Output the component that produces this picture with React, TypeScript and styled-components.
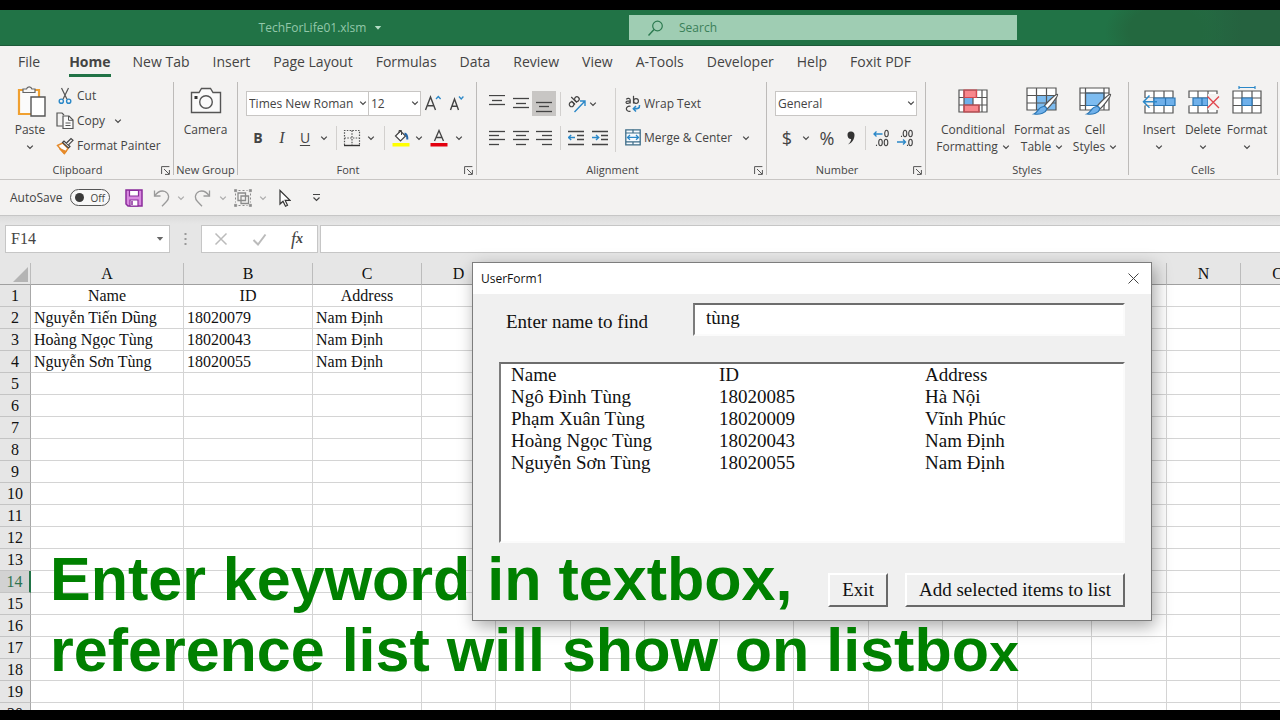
import React from "react";
import styled, { createGlobalStyle, css } from "styled-components";

const UI = `"Open Sans", "Noto Sans", sans-serif`;
const SERIF = `"Liberation Serif", "Times New Roman", serif`;
const INK = "#444444";
const BLUE = "#2b88c8";

const GlobalStyle = createGlobalStyle`
  *, *::before, *::after { box-sizing: border-box; }
  body { margin: 0; background: #000; }
  button, input, select { font: inherit; color: inherit; }
  svg { flex: none; }
`;

const Screen = styled.div`
  position: relative;
  display: flex;
  flex-direction: column;
  height: 100vh;
  padding: 10px 0;
  overflow: hidden;
  background: #000;
  color: ${INK};
  font: 12px/16px ${UI};
`;

/* ---------- Title bar ---------- */

const TitleBar = styled.header`
  flex: none;
  display: grid;
  grid-template-columns: 629fr 388fr 263fr;
  align-items: center;
  height: 36px;
  border-bottom: 1px solid #1d5a3a;
  background:
    radial-gradient(ellipse 60px 40px at 91% 60%, #23683f 60%, transparent 100%),
    linear-gradient(90deg, #217346 90%, #25623f 97%);
`;

const FileName = styled.button`
  display: flex;
  align-items: center;
  justify-content: center;
  gap: 8px;
  padding: 0 0 0 12px;
  border: 0;
  background: none;
  color: #92c8aa;
`;

const SearchBox = styled.label`
  display: flex;
  align-items: center;
  gap: 14px;
  height: 25px;
  padding: 0 18px;
  background: #9fcdb3;
  color: #2f7d52;
`;

const SearchInput = styled.input`
  flex: 1;
  min-width: 0;
  padding: 0;
  border: 0;
  outline: 0;
  background: none;
  &::placeholder { color: #3b8059; opacity: 1; }
`;

/* ---------- Ribbon ---------- */

const TabBar = styled.nav`
  flex: none;
  display: flex;
  gap: 23px;
  height: 34px;
  padding: 4px 18px 0;
  background: #f3f2f1;
  font-size: 14px;
  white-space: nowrap;
`;

const Tab = styled.a<{ $active?: boolean }>`
  height: 27px;
  padding-top: 3px;
  color: ${INK};
  line-height: 18px;
  text-decoration: none;
  ${(p) =>
    p.$active &&
    css`
      margin-left: 6px;
      margin-right: -1px;
      border-bottom: 3px solid #217346;
      font-weight: 700;
    `}
`;

const Ribbon = styled.section`
  flex: none;
  display: flex;
  height: 100px;
  padding-top: 2px;
  overflow: hidden;
  border-bottom: 1px solid #c8c6c4;
  background: #f3f2f1;
`;

const GroupBox = styled.div<{ $width: number }>`
  position: relative;
  flex: none;
  display: flex;
  flex-direction: column;
  width: ${(p) => p.$width}px;
  height: 93px;
  border-right: 1px solid #bdbbb9;
`;

const GroupBody = styled.div<{ $left?: number }>`
  flex: 1;
  display: flex;
  padding-left: ${(p) => p.$left ?? 8}px;
`;

const GroupLabel = styled.div<{ $launcher?: boolean }>`
  height: 13px;
  padding-right: ${(p) => (p.$launcher ? 18 : 0)}px;
  font-size: 11px;
  line-height: 16px;
  text-align: center;
  white-space: nowrap;
`;

const Launcher = styled.button`
  position: absolute;
  right: 3px;
  bottom: 0;
  display: flex;
  padding: 0;
  border: 0;
  background: none;
`;

const Stack = styled.div`
  display: flex;
  flex-direction: column;
  padding: 1px 0 0 4px;
`;

const ToolRows = styled.div`
  display: flex;
  flex-direction: column;
  gap: 9px;
  padding-top: 9px;
`;

const ToolRow = styled.div`
  display: flex;
  align-items: center;
  height: 25px;
`;

const Tool = styled.button<{ $w: number; $on?: boolean }>`
  flex: none;
  display: flex;
  align-items: center;
  justify-content: center;
  width: ${(p) => p.$w}px;
  height: 25px;
  padding: 0;
  border: 0;
  background: ${(p) => (p.$on ? "#c8c6c4" : "none")};
`;

const TextTool = styled.button`
  display: flex;
  align-items: center;
  gap: 3px;
  height: 25px;
  padding: 0;
  border: 0;
  background: none;
  white-space: nowrap;
`;

const BigTool = styled.button<{ $w: number }>`
  flex: none;
  display: flex;
  flex-direction: column;
  align-items: center;
  width: ${(p) => p.$w}px;
  padding: 0;
  border: 0;
  background: none;
  line-height: 17px;
  white-space: nowrap;
`;

const BigIcon = styled.span`
  display: flex;
  align-items: center;
  justify-content: center;
  height: 39px;
  padding-bottom: 2px;
`;

const LabelLine = styled.span`
  display: flex;
  align-items: center;
  justify-content: center;
  gap: 4px;
  height: 17px;
`;

const Divider = styled.span`
  flex: none;
  width: 1px;
  height: 24px;
  background: #d2d0ce;
`;

const TallDivider = styled.span`
  flex: none;
  width: 1px;
  height: 64px;
  margin: 6px 9px 0 2px;
  background: #d2d0ce;
`;

const SelectWrap = styled.span<{ $w: number }>`
  position: relative;
  flex: none;
  display: block;
  width: ${(p) => p.$w}px;
  height: 25px;
  & + & { margin-left: -1px; }
  svg { position: absolute; right: 2px; top: 8px; pointer-events: none; }
`;

const SelectField = styled.select`
  appearance: none;
  width: 100%;
  height: 100%;
  padding: 0 10px 0 2px;
  border: 1px solid #c8c6c4;
  border-radius: 0;
  background: #fff;
`;

const Glyph = styled.span<{ $size?: number; $bold?: boolean; $italic?: boolean; $under?: boolean }>`
  font-size: ${(p) => p.$size ?? 14}px;
  line-height: 18px;
  font-weight: ${(p) => (p.$bold ? 700 : 400)};
  font-style: ${(p) => (p.$italic ? "italic" : "normal")};
  font-family: ${(p) => (p.$italic ? SERIF : "inherit")};
  text-decoration: ${(p) => (p.$under ? "underline" : "none")};
  text-underline-offset: 2px;
`;

/* ---------- Quick access bar ---------- */

const QuickBar = styled.section`
  flex: none;
  display: flex;
  align-items: center;
  height: 36px;
  padding-left: 10px;
  border-bottom: 1px solid #c6c6c6;
  background: #f3f2f1;
`;

const AutoSave = styled.span`
  display: flex;
  align-items: center;
  width: 111px;
  gap: 8px;
`;

const Switch = styled.button`
  display: flex;
  align-items: center;
  gap: 6px;
  width: 40px;
  height: 17px;
  padding: 0 4px;
  border: 1px solid #555;
  border-radius: 9px;
  background: #f8f8f8;
  font-size: 10px;
  line-height: 14px;
  &::before {
    content: "";
    flex: none;
    width: 9px;
    height: 9px;
    border-radius: 50%;
    background: #3b3b3b;
  }
`;

/* ---------- Formula bar ---------- */

const FormulaBar = styled.section`
  flex: none;
  display: flex;
  height: 47px;
  padding: 9px 0 0 5px;
  background: linear-gradient(#dcdcdc, #e6e6e6 8px);
`;

const NameBox = styled.div`
  display: flex;
  align-items: center;
  width: 165px;
  height: 28px;
  padding: 0 5px;
  border: 1px solid #c6c6c6;
  background: #fff;
  font: 16px/20px ${SERIF};
`;

const PlainInput = styled.input`
  flex: 1;
  min-width: 0;
  width: 100%;
  height: 100%;
  padding: 0;
  border: 0;
  outline: 0;
  background: none;
`;

const Grip = styled.span`
  display: flex;
  align-items: center;
  justify-content: center;
  width: 31px;
  height: 28px;
`;

const FormulaTools = styled.div`
  display: flex;
  align-items: center;
  width: 117px;
  height: 28px;
  margin-right: 2px;
  border: 1px solid #c6c6c6;
  background: #fff;
`;

const FormulaField = styled.div`
  flex: 1;
  height: 28px;
  padding: 0 6px;
  border: 1px solid #c6c6c6;
  border-right: 0;
  background: #fff;
  font: 16px/20px ${SERIF};
`;

/* ---------- Worksheet ---------- */

const Sheet = styled.main`
  flex: 1;
  min-height: 0;
  overflow: hidden;
  background: #fff;
`;

const Grid = styled.table`
  table-layout: fixed;
  width: 0;
  border-collapse: separate;
  border-spacing: 0;
  color: #111;
  font: 16px/20px ${SERIF};
`;

const HeadCell = styled.th`
  height: 22px;
  padding: 1px 0 0;
  border-right: 1px solid #bcbcbc;
  border-bottom: 1px solid #a0a0a0;
  background: #e6e6e6;
  font-weight: 400;
`;

const Corner = styled(HeadCell)`
  svg { display: block; margin: 0 2px 0 auto; }
`;

const RowHead = styled.th<{ $current?: boolean }>`
  height: 22px;
  padding: 1px 0 0;
  border-right: ${(p) => (p.$current ? "2px solid #217346" : "1px solid #a8a8a8")};
  border-bottom: 1px solid #c4c4c4;
  background: ${(p) => (p.$current ? "#d2d2d2" : "#e6e6e6")};
  color: ${(p) => (p.$current ? "#2e7350" : "#111")};
  font-weight: 400;
`;

const Cell = styled.td<{ $center?: boolean }>`
  height: 22px;
  padding: 1px 3px 0;
  border-right: 1px solid #d4d4d4;
  border-bottom: 1px solid #d4d4d4;
  text-align: ${(p) => (p.$center ? "center" : "left")};
  white-space: nowrap;
`;

/* ---------- User form window ---------- */

const FormWindow = styled.div`
  position: absolute;
  left: 472px;
  top: 262px;
  width: 680px;
  display: flex;
  flex-direction: column;
  border: 1px solid #7d7d7d;
  background: #f0f0f0;
  box-shadow: 3px 5px 16px rgba(0, 0, 0, 0.35);
  color: #111;
  font: 19px/22px ${SERIF};
`;

const FormTitle = styled.div`
  flex: none;
  display: flex;
  align-items: center;
  justify-content: space-between;
  height: 31px;
  padding: 0 11px 0 8px;
  background: #fff;
  font: 12px/16px ${UI};
`;

const CloseButton = styled.button`
  display: flex;
  padding: 0;
  border: 0;
  background: none;
`;

const FormBody = styled.form`
  display: flex;
  flex-direction: column;
  padding: 9px 26px 13px;
`;

const Sunken = css`
  border: 2px solid;
  border-color: #6d6d6d #fbfbfb #fbfbfb #7c7c7c;
  background: #fff;
`;

const FieldRow = styled.div`
  display: flex;
  align-items: center;
  padding-left: 7px;
`;

const FieldLabel = styled.label`
  width: 187px;
  padding-top: 4px;
`;

const KeywordInput = styled.input`
  ${Sunken}
  flex: 1;
  min-width: 0;
  height: 33px;
  padding: 0 11px 3px;
  outline: 0;
`;

const ListBox = styled.div`
  ${Sunken}
  height: 181px;
  margin: 26px 0 30px;
`;

const ListTable = styled.table`
  table-layout: fixed;
  width: 100%;
  border-collapse: collapse;
  td { height: 22px; padding: 0 0 0 10px; }
`;

const FormActions = styled.div`
  display: flex;
  justify-content: flex-end;
  gap: 17px;
`;

const FormButton = styled.button`
  height: 34px;
  padding: 0 12px;
  border: 2px solid;
  border-color: #fff #696969 #696969 #fff;
  background: #f0f0f0;
`;

/* ---------- Caption ---------- */

const Caption = styled.p`
  position: absolute;
  left: 50px;
  top: 544px;
  margin: 0;
  color: #008000;
  font: bold 61px/71px "Liberation Sans", Arial, sans-serif;
  white-space: nowrap;
  pointer-events: none;
`;

const SmallLetter = styled.span`
  font-size: 54px;
`;

/* ---------- Icons ---------- */

type SvgProps = { w: number; h: number; children: React.ReactNode };
const Svg = ({ w, h, children }: SvgProps) => (
  <svg width={w} height={h} viewBox={`0 0 ${w} ${h}`} fill="none" stroke={INK} strokeWidth="1.2" aria-hidden="true">
    {children}
  </svg>
);

const Chevron = ({ color = INK }: { color?: string }) => (
  <Svg w={8} h={8}>
    <path d="M1.2 2.6 4 5.4 6.8 2.6" stroke={color} />
  </Svg>
);

const LauncherIcon = () => (
  <Svg w={9} h={9}>
    <path d="M.6 8V.6H8.4M3 3l5 5M8.4 4v4.4H4" stroke="#555" strokeWidth="1" />
  </Svg>
);

const SearchIcon = () => (
  <Svg w={18} h={18}>
    <circle cx="10.5" cy="7" r="4.8" stroke="#2c7a50" />
    <path d="M7 10.5 1.5 16.5" stroke="#2c7a50" strokeWidth="1.4" />
  </Svg>
);

const PasteIcon = () => (
  <Svg w={32} h={34}>
    <path d="M5 6H25V30H5Z" stroke="#f0a030" strokeWidth="2.2" fill="#fbfbfb" />
    <path d="M9 8.500V5h3.500a2.800 2.800 0 0 1 5.400 0H21V8.500Z" fill="#f6f6f6" stroke="#666" />
    <path d="M17 13H31V32H17Z" fill="#fff" stroke="#555" strokeWidth="1.400" />
  </Svg>
);

const CutIcon = () => (
  <Svg w={18} h={18}>
    <path d="M5.500 1 11 12.200M12.500 1 7 12.200" stroke="#555" strokeWidth="1.200" />
    <circle cx="5.300" cy="14.200" r="2.100" stroke={BLUE} strokeWidth="1.400" />
    <circle cx="12.700" cy="14.200" r="2.100" stroke={BLUE} strokeWidth="1.400" />
  </Svg>
);

const CopyIcon = () => (
  <Svg w={18} h={18}>
    <path d="M6.500 14H1V1h5l2 2" stroke="#555" />
    <path d="M7 4h6l4 4v8.500H7Z" fill="#fafafa" stroke="#555" />
    <path d="M12.500 4v4.300H17M9.500 11h5M9.500 13.500h5" stroke="#555" strokeWidth="1" />
  </Svg>
);

const PainterIcon = () => (
  <Svg w={18} h={18}>
    <path d="M1.500 8.500 6.500 6l5.500 5.500-3.500 5Z" fill="#fff" stroke="#e58a2a" strokeWidth="1.400" />
    <path d="M3.500 11.500 10 14.500 8 16.500Z" fill="#e58a2a" stroke="#e58a2a" />
    <path d="M6.500 5.500 8 4l6 5.500-1.500 1.500Z" fill="#f3f2f1" stroke="#444" />
    <path d="M10.500 6 15 1.500 17 3.300 12.500 7.800" fill="#f3f2f1" stroke="#444" />
  </Svg>
);

const CameraIcon = () => (
  <Svg w={32} h={28}>
    <path d="M1.500 5.500H9L11.500 1.500h9L23 5.500h7.500V25.500h-29Z" fill="#fafafa" stroke="#555" strokeWidth="1.400" />
    <circle cx="16" cy="15" r="6.300" stroke="#555" strokeWidth="1.400" />
    <path d="M4.500 9h3v3h-3Z" fill="#333" stroke="none" />
  </Svg>
);

const SizeIcon = ({ up }: { up?: boolean }) => (
  <Svg w={18} h={18}>
    {up ? (
      <>
        <path d="M1.500 15 6.500 2 11.500 15M3.200 10.800h6.600" strokeWidth="1.400" />
        <path d="M12 4 14.300 1.500l2.300 2.500" stroke={BLUE} strokeWidth="1.300" />
      </>
    ) : (
      <>
        <path d="M2.500 15 6.500 4l4 11M4 11.300h5" strokeWidth="1.400" />
        <path d="M11 1.500 13.200 4l2.200-2.500" stroke={BLUE} strokeWidth="1.300" />
      </>
    )}
  </Svg>
);

const BorderIcon = () => (
  <Svg w={18} h={18}>
    <path d="M1.500 16V1.500h15V16M1.500 9h15M9 1.500V16" strokeDasharray="1.500 1.300" stroke="#555" />
    <path d="M1 16.500h16" stroke="#333" strokeWidth="1.400" />
  </Svg>
);

const FillIcon = () => (
  <Svg w={18} h={18}>
    <path d="M3.500 7 8.500 2l5 5-5 5Z" fill="#fff" stroke="#444" />
    <path d="M7 4V1.500h2.500V6" stroke="#444" strokeWidth="1" />
    <path d="M12.500 4.500c2 .5 3 2 2.800 6" stroke="#2566a8" strokeWidth="2" />
    <path d="M.5 14h17v3.500H.5Z" fill="#ffff00" stroke="none" />
  </Svg>
);

const FontColorIcon = () => (
  <Svg w={18} h={18}>
    <path d="M4.500 12 9 1.500 13.500 12M6 8.500h6" strokeWidth="1.300" />
    <path d="M.5 14h17v3.500H.5Z" fill="#e3000f" stroke="none" />
  </Svg>
);

const LinesIcon = ({ rows, h = 16 }: { rows: [number, number, number][]; h?: number }) => (
  <Svg w={16} h={h}>
    {rows.map(([x, y, len]) => (
      <path key={y} d={`M${x} ${y}.5h${len}`} strokeWidth="1.3" />
    ))}
  </Svg>
);

const OrientIcon = () => (
  <Svg w={18} h={18}>
    <g transform="rotate(-45 5 8)">
      <circle cx="3" cy="8" r="2.300" />
      <path d="M5.400 5.300v5.200M8 2.500v8" />
      <circle cx="10.500" cy="8" r="2.300" />
    </g>
    <path d="M6.500 17 16.500 6.500M12 6H17V11" stroke={BLUE} strokeWidth="1.400" />
  </Svg>
);

const IndentIcon = ({ right }: { right?: boolean }) => (
  <Svg w={16} h={16}>
    <path d="M0 1.500h16M9 5.500h7M9 9.500h7M0 14.500h16" strokeWidth="1.300" />
    <path d={right ? "M0 7.500h6.500M4 5l2.700 2.500L4 10" : "M.5 7.500H7M3.200 5 .5 7.500 3.200 10"} stroke={BLUE} strokeWidth="1.400" />
  </Svg>
);

const WrapIcon = () => (
  <Svg w={16} h={18}>
    <path d="M1.200 4.300C2.500 3 5.200 3 5.200 5V8.500M5.200 5.800C2.500 5.800 1 6.300 1 7.300 1 9 4.300 8.800 5.200 7" />
    <path d="M8.500.800v7.700" />
    <circle cx="11" cy="6" r="2.400" />
    <path d="M5.500 11.300c-5-1.300-6 5.700 0 5" />
    <path d="M14.500 10c.5 3.500-2 4-6 3.800M11 11 8.300 13.800l2.700 2.800" stroke={BLUE} strokeWidth="1.500" />
  </Svg>
);

const MergeIcon = () => (
  <Svg w={16} h={17}>
    <path d="M.8.8h14.400v15H.8Z" stroke="#3c6c88" strokeWidth="1.300" fill="#f7fbfe" />
    <path d="M.8 4h14.400M.8 12.800h14.400M8 .8V4M8 12.800v3" stroke="#3c6c88" />
    <path d="M2.500 8.400h11M5 6 2.500 8.400 5 10.800M11 6l2.500 2.400L11 10.800" stroke={BLUE} strokeWidth="1.300" />
  </Svg>
);

const DecimalIcon = ({ more }: { more?: boolean }) => (
  <Svg w={18} h={18}>
    <g strokeWidth="1.100">
      {more ? (
        <>
          <ellipse cx="14.500" cy="4.500" rx="1.800" ry="3.200" />
          <ellipse cx="8.500" cy="13.500" rx="1.800" ry="3.200" />
          <ellipse cx="14" cy="13.500" rx="1.800" ry="3.200" />
          <path d="M4.500 15.700v1.300" />
          <path d="M10.500 5H2M4.500 2.500 2 5l2.500 2.500" stroke={BLUE} strokeWidth="1.300" />
        </>
      ) : (
        <>
          <ellipse cx="9" cy="4.500" rx="1.800" ry="3.200" />
          <ellipse cx="14.500" cy="4.500" rx="1.800" ry="3.200" />
          <path d="M5.500 6.700v1.300M11.500 15.700v1.300" />
          <ellipse cx="14.500" cy="13.500" rx="1.800" ry="3.200" />
          <path d="M1 13h8.500M7 10.500 9.500 13 7 15.500" stroke={BLUE} strokeWidth="1.300" />
        </>
      )}
    </g>
  </Svg>
);

const CommaIcon = () => (
  <Svg w={10} h={16}>
    <path d="M5 1.500a3.300 3.300 0 0 1 3.500 3.600C8.500 9.500 6 13 2 14.500c1.800-1.600 3-3.300 3.200-5.400C3 9.300 1.500 7.300 1.500 5A3.400 3.400 0 0 1 5 1.500Z" fill="#333" stroke="none" />
  </Svg>
);

const ConditionalIcon = () => (
  <Svg w={30} h={26}>
    <path d="M1 2h28v22H1Z" fill="#fff" stroke="none" />
    <path d="M6 2h12.500v7.500H6ZM6 17h15v7H6Z" fill="#f8878c" stroke="none" />
    <path d="M6 9.500h9V17H6Z" fill="#6fb0ea" stroke="none" />
    <path d="M1 2h28v22H1ZM1 9.500h28M1 17h28M6 2v22M24 2v22M18.500 2v7.500M21 17v7M15 9.500V17" stroke="#555" />
    <path d="M6 2h12.500v7.500H6ZM6 17h15v7H6Z" stroke="#d8474f" />
  </Svg>
);

const Brush = () => (
  <>
    <path d="M32.500 9.500c1 1-8 13-11 14.500l-2.500-2.500c2-3 12-13 13.500-12Z" fill="#fff" stroke="#555" />
    <path d="M18.500 21.500c2-.3 3.500 1.200 3 3-.6 3-6 5.500-12.500 4.500 4-1.500 4-7 9.500-7.500Z" fill="#6fb0ea" stroke="#2a76b4" />
  </>
);

const FormatTableIcon = () => (
  <Svg w={34} h={31}>
    <path d="M2 3h29v22H2Z" fill="#fff" stroke="none" />
    <path d="M11.500 10.500H31V25H11.500Z" fill="#7dbcf0" stroke="none" />
    <path d="M2 3h29v22H2ZM2 10.500h29M2 18h29M11.500 3v22M21.500 3v22" stroke="#555" />
    <Brush />
  </Svg>
);

const CellStylesIcon = () => (
  <Svg w={34} h={31}>
    <path d="M2 3h29v22H2Z" fill="#fff" stroke="none" />
    <path d="M7.500 8H26v12.500H7.500Z" fill="#7dbcf0" stroke="#2a76b4" />
    <path d="M2 3h29v22H2ZM2 8h29M2 20.500h5M7.500 3v22M26 3v22" stroke="#555" />
    <Brush />
  </Svg>
);

const CellsFrame = () => (
  <>
    <path d="M3 5h28v22H3Z" fill="#fff" stroke="none" />
    <path d="M3 5h28v22H3ZM3 12h28M3 19.500h28M12 5v22M22 5v22" stroke="#555" />
  </>
);

const InsertIcon = () => (
  <Svg w={34} h={30}>
    <CellsFrame />
    <path d="M1 12h10v7.500H1Z" fill="#f3f2f1" stroke="none" />
    <path d="M12 12h21v7.500H12Z" fill="#6fb0ea" stroke="#2a76b4" />
    <path d="M23.500 12v7.500" stroke="#2a76b4" />
    <path d="M15 15.800H1.500M7.500 9.500 1.500 15.800l6 6" stroke={BLUE} strokeWidth="1.500" />
  </Svg>
);

const DeleteIcon = () => (
  <Svg w={34} h={30}>
    <CellsFrame />
    <path d="M2 12h5v7.500H2Z" fill="#f3f2f1" stroke="none" />
    <path d="M7 12h15v7.500H7Z" fill="#6fb0ea" stroke="#2a76b4" />
    <path d="M22 8h11v16H22Z" fill="#f3f2f1" stroke="none" />
    <path d="M16 12v7.500" stroke="#2a76b4" />
    <path d="M21.500 10.500 33 22M33 10.500 21.500 22" stroke="#e0454d" strokeWidth="1.400" />
  </Svg>
);

const FormatIcon = () => (
  <Svg w={34} h={30}>
    <CellsFrame />
    <path d="M12 12h10v7.500H12Z" fill="#6fb0ea" stroke="#2a76b4" />
    <path d="M9 1.500h16M9 0v3M25 0v3" stroke={BLUE} />
  </Svg>
);

const SaveIcon = () => (
  <Svg w={18} h={18}>
    <path d="M1 1h16v16H3l-2-2Z" fill="#d98ae0" stroke="#8a2c9b" strokeWidth="1.500" />
    <path d="M4.500 1.500h9V7h-9Z" fill="#fff" stroke="#8a2c9b" />
    <path d="M5 11h8v6H5Z" fill="#fff" stroke="#8a2c9b" />
    <path d="M7 12v4" stroke="#8a2c9b" strokeWidth="1.500" />
  </Svg>
);

const UndoIcon = ({ flip }: { flip?: boolean }) => (
  <Svg w={18} h={18}>
    <g transform={flip ? "translate(18 0) scale(-1 1)" : undefined} stroke="#9a9a9a" strokeWidth="1.300">
      <path d="M1.500 1.500V7H7.500" />
      <path d="M1.500 7C4 3.500 8 1 12 2.500c4.500 2.300 4.500 7 1.500 10L9 17.300" />
    </g>
  </Svg>
);

const GroupIcon = () => (
  <Svg w={18} h={18}>
    <g stroke="#8a8a8a">
      <path d="M4 4h7.500v7.500H4ZM7 7h7.500v7.500H7Z" strokeWidth="1.300" />
      <path d="M4.500 1.500h9M4.500 16.500h9M1.500 4.500v9M16.500 4.500v9" strokeDasharray="2 2" strokeWidth="1" />
      <path d="M.5.500h2.200v2.200H.5ZM15.300.500h2.200v2.200h-2.200ZM.5 15.300h2.200v2.200H.5ZM15.300 15.300h2.200v2.200h-2.200Z" fill="#8a8a8a" strokeWidth=".6" />
    </g>
  </Svg>
);

const PointerIcon = () => (
  <Svg w={12} h={18}>
    <path d="M1 1.500V15L4 12.200l2.500 5 2-1-2.300-4.800h4.800Z" fill="#fff" stroke="#333" />
  </Svg>
);

const OverflowIcon = () => (
  <Svg w={9} h={10}>
    <path d="M1 1.500h7M1.500 4.500l3 3 3-3" />
  </Svg>
);

const Caret = ({ color = "#666" }: { color?: string }) => (
  <Svg w={8} h={6}>
    <path d="M.8 1h6.400L4 4.800Z" fill={color} stroke="none" />
  </Svg>
);

const CloseIcon = () => (
  <Svg w={13} h={13}>
    <path d="M1.500 1.500l10 10M11.500 1.500l-10 10" stroke="#444" strokeWidth="1" />
  </Svg>
);

/* ---------- Data ---------- */

const tabs = ["File", "Home", "New Tab", "Insert", "Page Layout", "Formulas", "Data", "Review", "View", "A-Tools", "Developer", "Help", "Foxit PDF"];

const columns: [string, number][] = [
  ["A", 153], ["B", 129], ["C", 109], ["D", 74], ["E", 75], ["F", 74], ["G", 75], ["H", 74],
  ["I", 75], ["J", 74], ["K", 75], ["L", 74], ["M", 75], ["N", 74], ["O", 75],
];

const sheetData = [
  ["Name", "ID", "Address"],
  ["Nguyễn Tiến Dũng", "18020079", "Nam Định"],
  ["Hoàng Ngọc Tùng", "18020043", "Nam Định"],
  ["Nguyễn Sơn Tùng", "18020055", "Nam Định"],
];

const matches = [
  ["Name", "ID", "Address"],
  ["Ngô Đình Tùng", "18020085", "Hà Nội"],
  ["Phạm Xuân Tùng", "18020009", "Vĩnh Phúc"],
  ["Hoàng Ngọc Tùng", "18020043", "Nam Định"],
  ["Nguyễn Sơn Tùng", "18020055", "Nam Định"],
];

const rowNumbers = Array.from({ length: 20 }, (_, i) => i + 1);

/* ---------- Parts ---------- */

type GroupProps = { label: string; width: number; left?: number; launcher?: boolean; children: React.ReactNode };
const Group = ({ label, width, left, launcher, children }: GroupProps) => (
  <GroupBox $width={width}>
    <GroupBody $left={left}>{children}</GroupBody>
    <GroupLabel $launcher={launcher}>{label}</GroupLabel>
    {launcher && (
      <Launcher aria-label={`${label} settings`}>
        <LauncherIcon />
      </Launcher>
    )}
  </GroupBox>
);

const Combo = ({ label, value, width }: { label: string; value: string; width: number }) => (
  <SelectWrap $w={width}>
    <SelectField aria-label={label} defaultValue={value}>
      <option>{value}</option>
    </SelectField>
    <Chevron />
  </SelectWrap>
);

const More = ({ label, w = 14, color }: { label: string; w?: number; color?: string }) => (
  <Tool $w={w} aria-label={label}>
    <Chevron color={color} />
  </Tool>
);

const Gap = ({ w }: { w: number }) => (
  <Tool as="span" $w={w}>
    <Divider />
  </Tool>
);

type BigProps = { icon: React.ReactNode; lines: string[]; w: number; menu?: "inline" | "below" };
const Big = ({ icon, lines, w, menu }: BigProps) => (
  <BigTool $w={w}>
    <BigIcon>{icon}</BigIcon>
    {lines.map((line, i) => (
      <LabelLine key={line}>
        {line}
        {menu === "inline" && i === lines.length - 1 && <Chevron />}
      </LabelLine>
    ))}
    {menu === "below" && (
      <LabelLine>
        <Chevron />
      </LabelLine>
    )}
  </BigTool>
);

const RibbonGroups = () => (
  <Ribbon>
    <Group label="Clipboard" width={174} launcher>
      <Big icon={<PasteIcon />} lines={["Paste"]} w={44} menu="below" />
      <Stack>
        <TextTool><CutIcon />Cut</TextTool>
        <TextTool as="span"><TextTool><CopyIcon />Copy</TextTool><More label="Copy options" w={20} /></TextTool>
        <TextTool><PainterIcon />Format Painter</TextTool>
      </Stack>
    </Group>
    <Group label="New Group" width={64} left={0}>
      <Big icon={<CameraIcon />} lines={["Camera"]} w={63} />
    </Group>
    <Group label="Font" width={239} launcher>
      <ToolRows>
        <ToolRow>
          <Combo label="Font name" value="Times New Roman" width={123} />
          <Combo label="Font size" value="12" width={53} />
          <Tool $w={24} aria-label="Increase font size"><SizeIcon up /></Tool>
          <Tool $w={24} aria-label="Decrease font size"><SizeIcon /></Tool>
        </ToolRow>
        <ToolRow>
          <Tool $w={24}><Glyph $bold>B</Glyph></Tool>
          <Tool $w={24}><Glyph $italic $size={16}>I</Glyph></Tool>
          <Tool $w={22}><Glyph $under>U</Glyph></Tool>
          <More label="Underline style" w={16} />
          <Gap w={8} />
          <Tool $w={24} aria-label="Borders"><BorderIcon /></Tool>
          <More label="Border style" />
          <Gap w={12} />
          <Tool $w={22} aria-label="Fill color"><FillIcon /></Tool>
          <More label="Fill colors" />
          <Tool $w={26} aria-label="Font color"><FontColorIcon /></Tool>
          <More label="Font colors" />
        </ToolRow>
      </ToolRows>
    </Group>
    <Group label="Alignment" width={290} launcher>
      <ToolRows>
        <ToolRow>
          <Tool $w={24} aria-label="Top align"><LinesIcon rows={[[0, 0, 16], [3, 5, 10], [0, 9, 16]]} h={18} /></Tool>
          <Tool $w={23} aria-label="Middle align"><LinesIcon rows={[[0, 3, 16], [3, 8, 10], [0, 12, 16]]} h={18} /></Tool>
          <Tool $w={24} $on aria-label="Bottom align"><LinesIcon rows={[[0, 7, 16], [3, 11, 10], [0, 16, 16]]} h={18} /></Tool>
          <Gap w={9} />
          <Tool $w={24} aria-label="Orientation"><OrientIcon /></Tool>
          <More label="Orientation options" w={8} />
        </ToolRow>
        <ToolRow>
          <Tool $w={24} aria-label="Align left"><LinesIcon rows={[[0, 1, 16], [0, 5, 10], [0, 9, 16], [0, 14, 10]]} /></Tool>
          <Tool $w={23} aria-label="Center"><LinesIcon rows={[[0, 1, 16], [3, 5, 10], [0, 9, 16], [3, 14, 10]]} /></Tool>
          <Tool $w={24} aria-label="Align right"><LinesIcon rows={[[0, 1, 16], [6, 5, 10], [0, 9, 16], [6, 14, 10]]} /></Tool>
          <Gap w={9} />
          <Tool $w={22} aria-label="Decrease indent"><IndentIcon /></Tool>
          <Tool $w={26} aria-label="Increase indent"><IndentIcon right /></Tool>
        </ToolRow>
      </ToolRows>
      <TallDivider />
      <ToolRows>
        <TextTool><WrapIcon />Wrap Text</TextTool>
        <TextTool as="span"><TextTool><MergeIcon />Merge &amp; Center</TextTool><More label="Merge options" w={22} /></TextTool>
      </ToolRows>
    </Group>
    <Group label="Number" width={159} launcher>
      <ToolRows>
        <ToolRow>
          <Combo label="Number format" value="General" width={142} />
        </ToolRow>
        <ToolRow>
          <Tool $w={24}><Glyph $size={18}>$</Glyph></Tool>
          <More label="Currency options" />
          <Tool $w={28}><Glyph $size={18}>%</Glyph></Tool>
          <Tool $w={20} aria-label="Comma style"><CommaIcon /></Tool>
          <Gap w={9} />
          <Tool $w={22} aria-label="Increase decimal"><DecimalIcon more /></Tool>
          <Tool $w={26} aria-label="Decrease decimal"><DecimalIcon /></Tool>
        </ToolRow>
      </ToolRows>
    </Group>
    <Group label="Styles" width={203}>
      <Big icon={<ConditionalIcon />} lines={["Conditional", "Formatting"]} w={78} menu="inline" />
      <Big icon={<FormatTableIcon />} lines={["Format as", "Table"]} w={60} menu="inline" />
      <Big icon={<CellStylesIcon />} lines={["Cell", "Styles"]} w={46} menu="inline" />
    </Group>
    <Group label="Cells" width={149}>
      <Big icon={<InsertIcon />} lines={["Insert"]} w={44} menu="below" />
      <Big icon={<DeleteIcon />} lines={["Delete"]} w={44} menu="below" />
      <Big icon={<FormatIcon />} lines={["Format"]} w={44} menu="below" />
    </Group>
  </Ribbon>
);

const QuickAccess = () => (
  <QuickBar>
    <AutoSave>
      AutoSave
      <Switch role="switch" aria-checked={false} aria-label="AutoSave">Off</Switch>
    </AutoSave>
    <Tool $w={26} aria-label="Save"><SaveIcon /></Tool>
    <Tool $w={30} aria-label="Undo"><UndoIcon /></Tool>
    <More label="Undo history" w={8} color="#aaa" />
    <Tool $w={34} aria-label="Redo"><UndoIcon flip /></Tool>
    <More label="Redo history" w={8} color="#aaa" />
    <Tool $w={32} aria-label="Group"><GroupIcon /></Tool>
    <More label="Group options" w={8} color="#aaa" />
    <Tool $w={36} aria-label="Select"><PointerIcon /></Tool>
    <Tool $w={26} aria-label="Customize toolbar"><OverflowIcon /></Tool>
  </QuickBar>
);

const Worksheet = () => (
  <Sheet>
    <Grid>
      <colgroup>
        <col style={{ width: 31 }} />
        {columns.map(([name, width]) => (
          <col key={name} style={{ width }} />
        ))}
      </colgroup>
      <thead>
        <tr>
          <Corner aria-label="Select all">
            <Svg w={15} h={15}>
              <path d="M15 0V15H0Z" fill="#b4b4b4" stroke="none" />
            </Svg>
          </Corner>
          {columns.map(([name]) => (
            <HeadCell key={name} scope="col">{name}</HeadCell>
          ))}
        </tr>
      </thead>
      <tbody>
        {rowNumbers.map((n) => (
          <tr key={n}>
            <RowHead scope="row" $current={n === 14}>{n}</RowHead>
            {columns.map(([name], c) => (
              <Cell key={name} $center={n === 1}>{sheetData[n - 1]?.[c]}</Cell>
            ))}
          </tr>
        ))}
      </tbody>
    </Grid>
  </Sheet>
);

const UserForm = () => (
  <FormWindow role="dialog" aria-label="UserForm1">
    <FormTitle>
      UserForm1
      <CloseButton aria-label="Close"><CloseIcon /></CloseButton>
    </FormTitle>
    <FormBody onSubmit={(e) => e.preventDefault()}>
      <FieldRow>
        <FieldLabel htmlFor="keyword">Enter name to find</FieldLabel>
        <KeywordInput id="keyword" defaultValue="tùng" />
      </FieldRow>
      <ListBox>
        <ListTable>
          <colgroup>
            <col style={{ width: 208 }} />
            <col style={{ width: 206 }} />
            <col />
          </colgroup>
          <tbody>
            {matches.map((row) => (
              <tr key={row[1]}>
                {row.map((value) => (
                  <td key={value}>{value}</td>
                ))}
              </tr>
            ))}
          </tbody>
        </ListTable>
      </ListBox>
      <FormActions>
        <FormButton type="button">Exit</FormButton>
        <FormButton type="button">Add selected items to list</FormButton>
      </FormActions>
    </FormBody>
  </FormWindow>
);

export default function App() {
  return (
    <>
      <GlobalStyle />
      <Screen>
        <TitleBar>
          <FileName>TechForLife01.xlsm<Caret color="#b5dcc5" /></FileName>
          <SearchBox>
            <SearchIcon />
            <SearchInput type="text" placeholder="Search" aria-label="Search" />
          </SearchBox>
        </TitleBar>
        <TabBar>
          {tabs.map((name) => (
            <Tab key={name} href="#" $active={name === "Home"}>{name}</Tab>
          ))}
        </TabBar>
        <RibbonGroups />
        <QuickAccess />
        <FormulaBar>
          <NameBox>
            <PlainInput aria-label="Name box" defaultValue="F14" />
            <Caret />
          </NameBox>
          <Grip>
            <Svg w={3} h={12}>
              <path d="M1.500 0v12" stroke="#999" strokeWidth="2" strokeDasharray="2 3" />
            </Svg>
          </Grip>
          <FormulaTools>
            <Tool $w={38} aria-label="Cancel">
              <Svg w={14} h={14}><path d="M1.500 1.500l11 11M12.500 1.500l-11 11" stroke="#bbb" strokeWidth="1.500" /></Svg>
            </Tool>
            <Tool $w={38} aria-label="Enter">
              <Svg w={15} h={13}><path d="M1.500 7l4.500 4.500L13.500 1.500" stroke="#bbb" strokeWidth="2" /></Svg>
            </Tool>
            <Tool $w={38} aria-label="Insert function">
              <Glyph $italic $size={18}>f</Glyph>
              <Glyph $italic $bold $size={14}>x</Glyph>
            </Tool>
          </FormulaTools>
          <FormulaField>
            <PlainInput aria-label="Formula" />
          </FormulaField>
        </FormulaBar>
        <Worksheet />
        <UserForm />
        <Caption>
          Enter keyword in textbox,
          <br />
          reference list will show on listbo<SmallLetter>x</SmallLetter>
        </Caption>
      </Screen>
    </>
  );
}
